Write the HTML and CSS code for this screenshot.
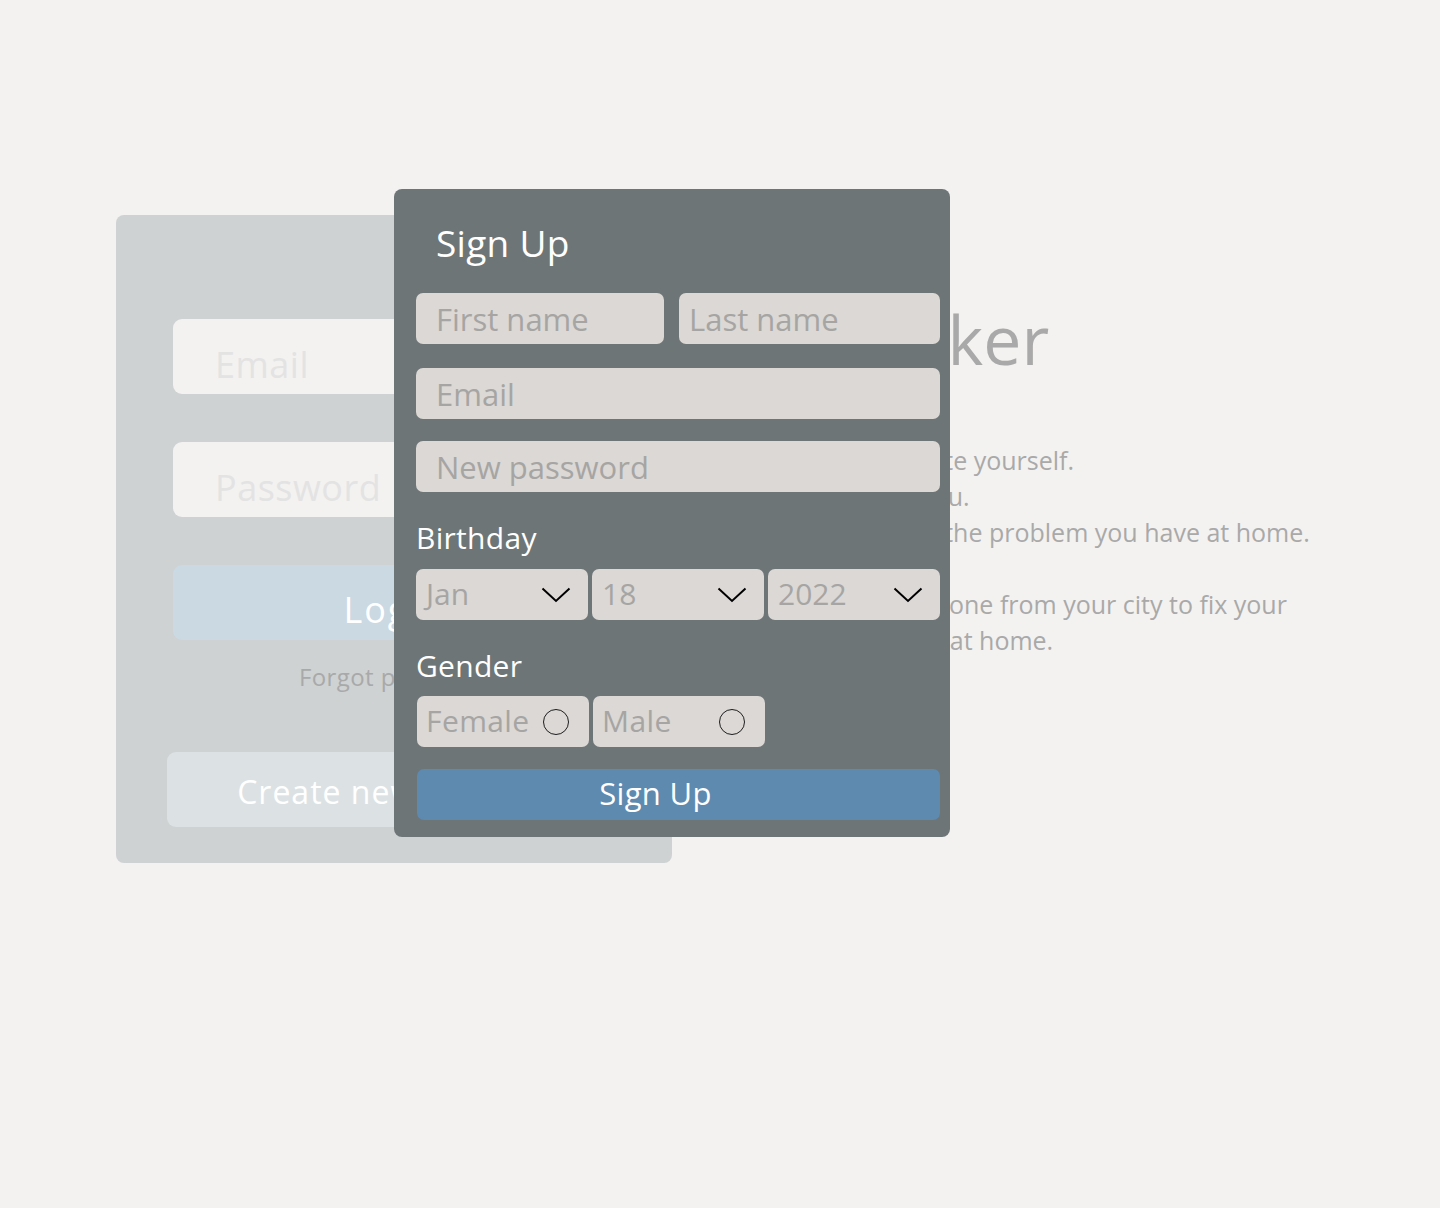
FILE: index.html
```html
<!DOCTYPE html>
<html lang="en">
<head>
<meta charset="utf-8">
<title>Worker - Sign Up</title>
<link rel="stylesheet" href="styles.css">
</head>
<body>
<div class="page">
  <div class="login-card">
    <input class="login-input" type="email" placeholder="Email">
    <input class="login-input pass" type="password" placeholder="Password">
    <button class="login-btn">Login</button>
    <div class="forgot">Forgot password?</div>
    <button class="create-btn">Create new account</button>
  </div>

  <div class="about">
    <h1 class="about-title">Worker</h1>
    <p class="about-text">Don't irritate yourself.<br>We help you.<br>Just tell us the problem you have at home.</p>
    <p class="about-text second">Book someone from your city to fix your<br>appliances at home.</p>
  </div>

  <div class="signup">
    <h2 class="signup-title">Sign Up</h2>
    <div class="name-row">
      <input class="su-input" type="text" placeholder="First name">
      <input class="su-input last" type="text" placeholder="Last name">
    </div>
    <input class="su-input email" type="email" placeholder="Email">
    <input class="su-input password" type="password" placeholder="New password">

    <div class="su-label">Birthday</div>
    <div class="selects">
      <div class="select"><span>Jan</span>
        <svg class="chev" width="30" height="16" viewBox="0 0 30 16"><path d="M1.5 1.5 L15 14 L28.5 1.5" fill="none" stroke="#000" stroke-width="2"/></svg>
      </div>
      <div class="select"><span>18</span>
        <svg class="chev" width="30" height="16" viewBox="0 0 30 16"><path d="M1.5 1.5 L15 14 L28.5 1.5" fill="none" stroke="#000" stroke-width="2"/></svg>
      </div>
      <div class="select"><span>2022</span>
        <svg class="chev" width="30" height="16" viewBox="0 0 30 16"><path d="M1.5 1.5 L15 14 L28.5 1.5" fill="none" stroke="#000" stroke-width="2"/></svg>
      </div>
    </div>

    <div class="su-label gender">Gender</div>
    <div class="radios">
      <div class="radio"><span>Female</span><span class="circle"></span></div>
      <div class="radio"><span>Male</span><span class="circle"></span></div>
    </div>

    <button class="signup-btn">Sign Up</button>
  </div>
</div>
</body>
</html>
```

FILE: styles.css
```css
html, body {
  margin: 0;
  padding: 0;
}

body {
  background: #f3f2f0;
  font-family: "Open Sans", "DejaVu Sans", sans-serif;
}

input, button {
  font: inherit;
  outline: none;
}

.page {
  position: relative;
  width: 1440px;
  height: 1208px;
  box-sizing: border-box;
  padding: 215px 0 0 116px;
  display: flex;
  align-items: flex-start;
}

/* ---------- login card (background) ---------- */
.login-card {
  width: 556px;
  height: 648px;
  box-sizing: border-box;
  background: #ced2d3;
  border-radius: 8px;
  padding: 104px 57px 0;
  display: flex;
  flex-direction: column;
}

.login-input {
  width: 100%;
  height: 75px;
  box-sizing: border-box;
  border: none;
  border-radius: 9px;
  background: #f3f2f0;
  padding: 16px 0 0 42px;
  font-size: 36px;
  letter-spacing: 0.5px;
  color: #e2e2e2;
}

.login-input::placeholder {
  color: #e3e3e3;
  opacity: 1;
}

.login-input.pass {
  margin-top: 48px;
}

.login-btn {
  margin-top: 48px;
  height: 75px;
  border: none;
  border-radius: 9px;
  background: #cbd9e3;
  color: #ffffff;
  font-size: 36px;
  letter-spacing: 2px;
  padding: 14px 0 0;
}

.forgot {
  margin-top: 21px;
  padding-left: 14px;
  text-align: center;
  font-size: 24px;
  letter-spacing: 0.4px;
  line-height: 32px;
  color: #a9a9a9;
}

.create-btn {
  margin: 59px -6px 0;
  height: 75px;
  border: none;
  border-radius: 9px;
  background: #dce2e4;
  color: #ffffff;
  font-size: 32px;
  letter-spacing: 1px;
  padding: 4px 0 0;
}

/* ---------- about text (background) ---------- */
.about {
  margin-left: 147px;
  padding-top: 90px;
  color: #a9a9a9;
  white-space: nowrap;
}

.about-title {
  margin: 0;
  font-weight: 400;
  font-size: 68px;
  line-height: 68px;
  margin-left: -3px;
}

.about-text {
  margin: 69px 0 0;
  font-size: 25px;
  line-height: 36px;
}

.about-text.second {
  margin-top: 36px;
}

/* ---------- sign up modal (overlay) ---------- */
.signup {
  position: absolute;
  left: 394px;
  top: 189px;
  width: 556px;
  height: 648px;
  box-sizing: border-box;
  background: #6e7577;
  border-radius: 8px;
  padding: 32px 10px 0 22px;
  display: flex;
  flex-direction: column;
}

.signup-title {
  margin: 0 0 0 20px;
  font-weight: 400;
  font-size: 37px;
  letter-spacing: 0.3px;
  line-height: 43px;
  color: #ffffff;
}

.name-row {
  margin-top: 29px;
  display: grid;
  grid-template-columns: 248px 1fr;
  gap: 15px;
}

.su-input {
  width: 100%;
  height: 51px;
  box-sizing: border-box;
  border: none;
  border-radius: 7px;
  background: #dbd8d5;
  padding: 0 0 0 20px;
  font-size: 31px;
  color: #a6a5a3;
}

.su-input.last {
  padding-left: 10px;
}

.su-input::placeholder {
  color: #a6a5a3;
  opacity: 1;
}

.su-input.email {
  margin-top: 24px;
}

.su-input.password {
  margin-top: 22px;
}

.su-label {
  margin-top: 28px;
  font-size: 30px;
  letter-spacing: 0.3px;
  line-height: 36px;
  color: #ffffff;
}

.selects {
  margin-top: 13px;
  display: grid;
  grid-template-columns: repeat(3, 1fr);
  gap: 4px;
}

.select {
  height: 51px;
  box-sizing: border-box;
  border-radius: 7px;
  background: #dbd8d5;
  padding: 0 17px 3px 10px;
  display: flex;
  align-items: center;
  justify-content: space-between;
  font-size: 30px;
  color: #a6a5a3;
}

.chev {
  display: block;
  margin-top: 3px;
}

.su-label.gender {
  margin-top: 28px;
}

.radios {
  margin: 12px 0 0 1px;
  display: grid;
  grid-template-columns: 172px 172px;
  gap: 4px;
}

.radio {
  height: 51px;
  box-sizing: border-box;
  border-radius: 7px;
  background: #dbd8d5;
  padding: 0 20px 3px 9px;
  display: flex;
  align-items: center;
  justify-content: space-between;
  font-size: 30px;
  letter-spacing: 0.4px;
  color: #a6a5a3;
}

.circle {
  width: 26px;
  height: 26px;
  box-sizing: border-box;
  border: 1px solid #1e1e1e;
  border-radius: 50%;
  margin-top: 3px;
}

.signup-btn {
  margin: 22px 0 0 1px;
  height: 51px;
  border: none;
  border-radius: 7px;
  background: #5e8ab0;
  color: #ffffff;
  font-size: 31px;
  letter-spacing: 0.3px;
  padding: 0 46px 4px 0;
}
```
